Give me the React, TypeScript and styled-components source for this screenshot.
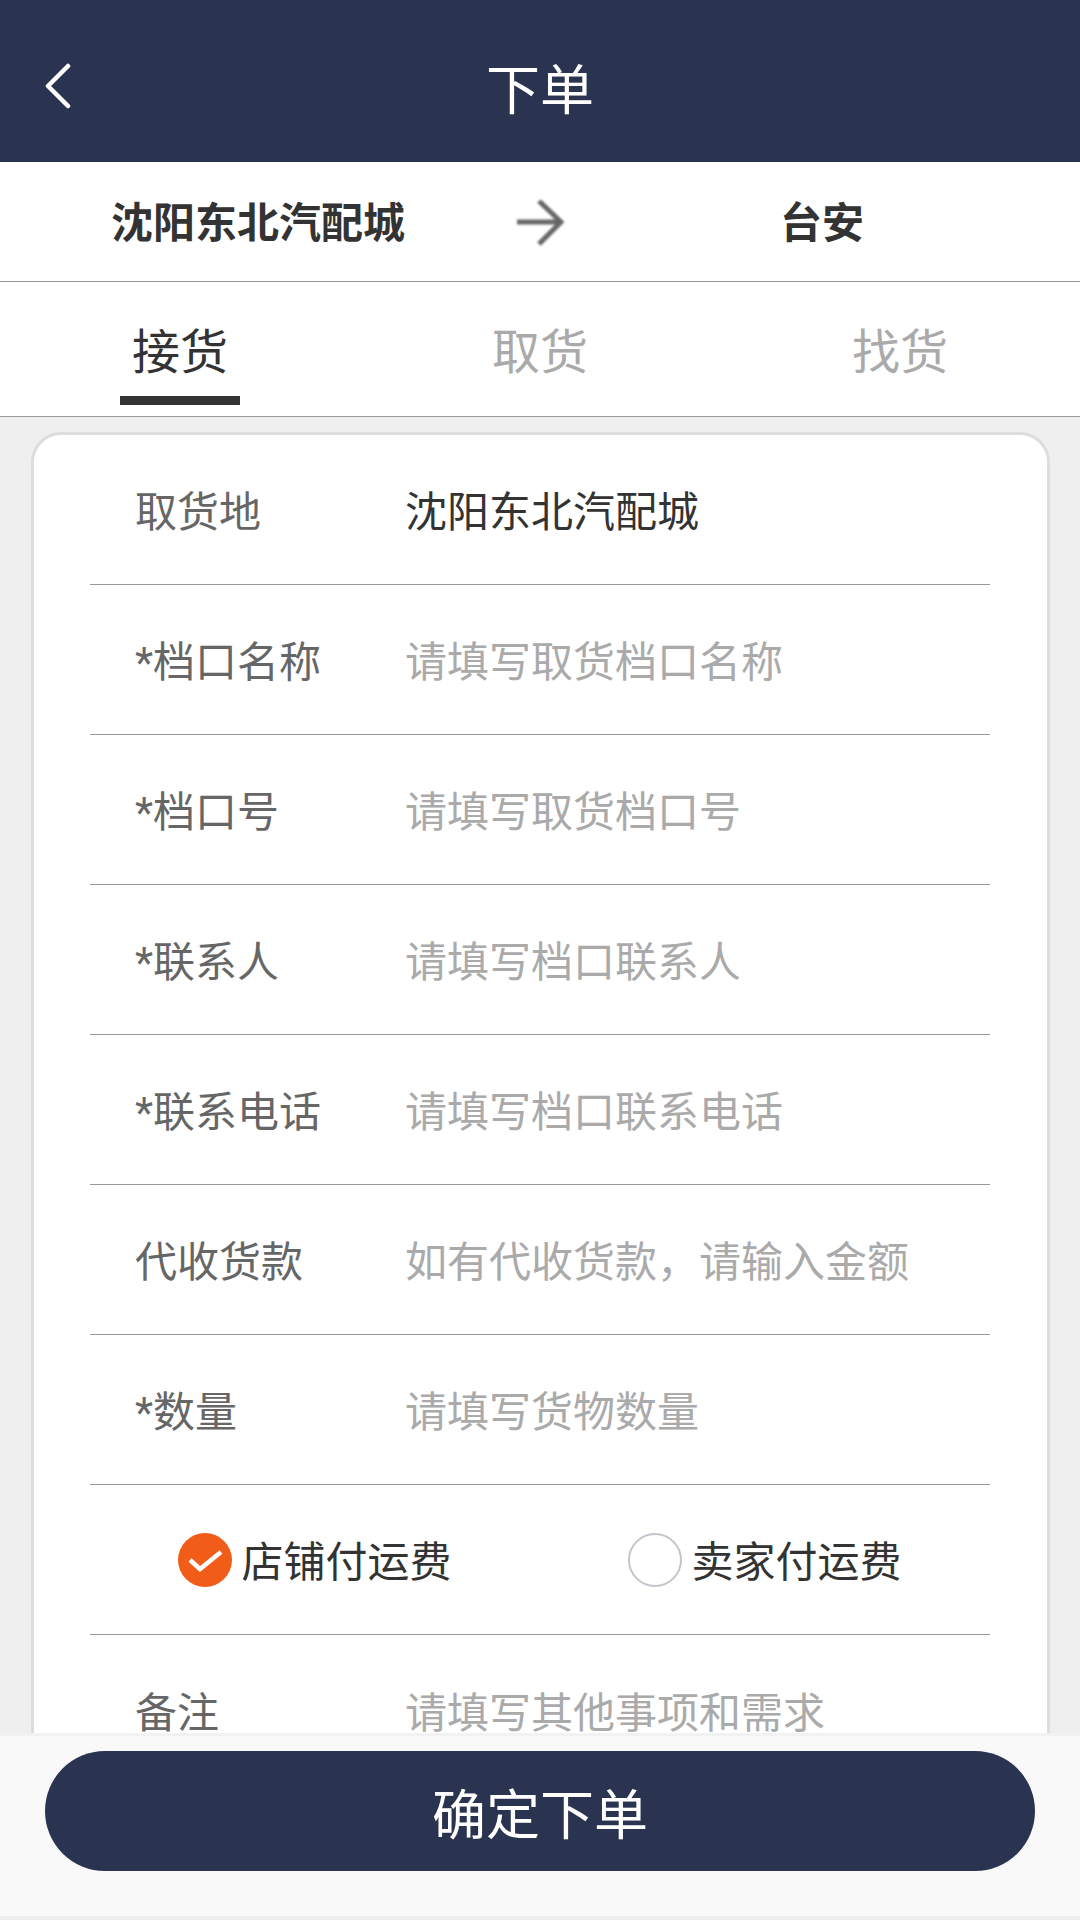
import { FC } from 'react';
import styled, { createGlobalStyle } from 'styled-components';

const fields = [
    { label: '取货地', value: '沈阳东北汽配城', filled: true },
    { label: '*档口名称', value: '请填写取货档口名称' },
    { label: '*档口号', value: '请填写取货档口号' },
    { label: '*联系人', value: '请填写档口联系人' },
    { label: '*联系电话', value: '请填写档口联系电话' },
    { label: '代收货款', value: '如有代收货款，请输入金额' },
    { label: '*数量', value: '请填写货物数量' },
];

const App: FC = () => {
    return (
        <Page>
            <GlobalStyle />
            <Header>
                <BackButton>
                    <svg width="26" height="46" viewBox="0 0 26 46" fill="none">
                        <path d="M23 3 L3 23 L23 43" stroke="#fff" strokeWidth="4.5" strokeLinecap="round" strokeLinejoin="round" />
                    </svg>
                </BackButton>
                <Title>下单</Title>
            </Header>
            <Route>
                <RoutePlace>沈阳东北汽配城</RoutePlace>
                <RouteArrow width="48" height="48" viewBox="0 0 48 48" fill="none">
                    <path d="M1 22 H45 M23 1 L45 22 L23 44" stroke="#666" strokeWidth="5" />
                </RouteArrow>
                <RoutePlace>台安</RoutePlace>
            </Route>
            <Tabs>
                <Tab $active>接货</Tab>
                <Tab>取货</Tab>
                <Tab>找货</Tab>
            </Tabs>
            <Content>
                <Card>
                    {fields.map((f) => (
                        <Row key={f.label}>
                            <Label>{f.label}</Label>
                            <Value $filled={f.filled}>{f.value}</Value>
                        </Row>
                    ))}
                    <PayRow>
                        <PayOption>
                            <svg width="54" height="54" viewBox="0 0 54 54">
                                <circle cx="27" cy="27" r="27" fill="#f25c19" />
                                <path d="M12 27 L22 36 L43 19" stroke="#fff" strokeWidth="4.5" fill="none" />
                            </svg>
                            <PayText>店铺付运费</PayText>
                        </PayOption>
                        <PayOption>
                            <svg width="54" height="54" viewBox="0 0 54 54">
                                <circle cx="27" cy="27" r="26" fill="#fff" stroke="#c4c4cc" strokeWidth="2" />
                            </svg>
                            <PayText>卖家付运费</PayText>
                        </PayOption>
                    </PayRow>
                    <Row>
                        <Label>备注</Label>
                        <Value>请填写其他事项和需求</Value>
                    </Row>
                </Card>
            </Content>
            <Footer>
                <SubmitButton>确定下单</SubmitButton>
            </Footer>
        </Page>
    );
};

const GlobalStyle = createGlobalStyle`
    html, body {
        margin: 0;
        padding: 0;
        background: #efefef;
    }
    * {
        box-sizing: border-box;
    }
`;

const Page = styled.div`
    width: 1080px;
    height: 1920px;
    display: flex;
    flex-direction: column;
    overflow: hidden;
    background: #efefef;
    font-family: Roboto, "Noto Sans CJK SC", sans-serif;
`;

const Header = styled.div`
    height: 162px;
    flex-shrink: 0;
    background: #2a3350;
    display: grid;
    grid-template-columns: 1fr auto 1fr;
    align-items: center;
    padding: 0 45px;
`;

const BackButton = styled.div`
    display: flex;
    align-items: center;
    margin-top: 10px;
`;

const Title = styled.div`
    font-size: 54px;
    line-height: 1;
    color: #fff;
    margin-top: 21px;
`;

const Route = styled.div`
    height: 120px;
    flex-shrink: 0;
    background: #fff;
    border-bottom: 1px solid #999;
    display: grid;
    grid-template-columns: 516px 48px 516px;
    align-items: center;
`;

const RoutePlace = styled.div`
    font-size: 42px;
    font-weight: 700;
    line-height: 1;
    color: #333;
    text-align: center;
    margin-top: 5px;
`;

const RouteArrow = styled.svg`
    filter: blur(0.8px);
    margin-top: 4px;
`;

const Tabs = styled.div`
    height: 135px;
    flex-shrink: 0;
    background: #fff;
    border-bottom: 1px solid #999;
    display: flex;
    padding-top: 41px;
`;

const Tab = styled.div<{ $active?: boolean }>`
    flex: 1;
    display: flex;
    flex-direction: column;
    align-items: center;
    font-size: 48px;
    line-height: 60px;
    color: ${({ $active }) => ($active ? '#333' : '#aaa')};

    &::after {
        content: '';
        width: 120px;
        height: 9px;
        margin-top: 13px;
        background: ${({ $active }) => ($active ? '#333' : 'transparent')};
    }
`;

const Content = styled.div`
    flex: 1;
    min-height: 0;
    overflow: hidden;
    padding: 15px 30px 0 31px;
`;

const Card = styled.div`
    background: #fff;
    border: 3px solid #ddd;
    border-radius: 30px;
    padding: 0 57px 0 56px;
`;

const Row = styled.div`
    height: 150px;
    display: flex;
    align-items: center;
    padding: 0 0 2px 45px;
    border-bottom: 1px solid #999;

    &:last-child {
        border-bottom: none;
    }
`;

const Label = styled.div`
    width: 270px;
    flex-shrink: 0;
    font-size: 42px;
    color: #666;
`;

const Value = styled.div<{ $filled?: boolean }>`
    font-size: 42px;
    color: ${({ $filled }) => ($filled ? '#333' : '#aaa')};
`;

const PayRow = styled(Row)`
    padding: 0;
`;

const PayOption = styled.div`
    flex: 1;
    display: flex;
    align-items: center;
    justify-content: center;
    gap: 9px;
`;

const PayText = styled.span`
    font-size: 42px;
    color: #333;
    margin-bottom: 2px;
`;

const Footer = styled.div`
    height: 187px;
    flex-shrink: 0;
    background: #f9f9f9;
    border-top: 3px solid #f2f2f2;
    border-bottom: 4px solid #efefef;
    padding: 15px 45px 0;
`;

const SubmitButton = styled.div`
    height: 120px;
    border-radius: 60px;
    background: #2a3350;
    color: #fff;
    font-size: 54px;
    display: flex;
    align-items: center;
    justify-content: center;
`;

export default App;
